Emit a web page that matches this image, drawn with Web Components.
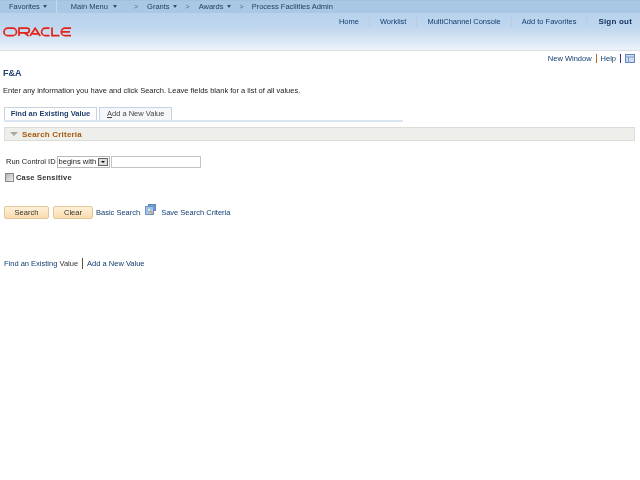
<!DOCTYPE html>
<html>
<head>
<meta charset="utf-8">
<title>F&amp;A</title>
<style>
  html, body { margin: 0; padding: 0; background: #fff; }
  body { font: 7.5px "Liberation Sans", Arial, sans-serif; color: #222; width: 640px; height: 480px; overflow: hidden; }
</style>
</head>
<body>
<ps-header></ps-header>
<ps-page></ps-page>

<template id="tpl-header">
  <style>
    :host { display: block; height: 51px; font-size: 7.5px; border-bottom: 1px solid #dfdfe6; box-sizing: border-box; filter: blur(.25px);
      background: linear-gradient(#b3cfe9 0, #b9d3ec 14px, #c0d7ee 28px, #d0e1f2 36px, #e0ebf7 44px, #edf3fa 50px); }
    nav { display: flex; align-items: center; height: 13px; box-sizing: border-box; padding: 0 0 1px 9px; color: #1f3b58;
      border-top: 1px solid #a5c2dd; background: #a9c8e6; white-space: nowrap; }
    nav span { display: inline-flex; align-items: center; }
    nav i { display: inline-block; width: 0; height: 0; border: 2.5px solid transparent; border-top: 3px solid #33506e; border-bottom: 0; margin-left: 3px; }
    .sep { width: 1px; height: 13px; background: #c6daee; margin: 0 14px 0 9px; }
    .gt { color: #4a6a8c; font-size: 7px; }
    .row { display: flex; justify-content: space-between; align-items: flex-start; }
    svg { display: block; margin: 14px 0 0 3px; }
    ul { display: flex; list-style: none; margin: 4px 0 0; padding: 0 8px 0 0; color: #123c70; line-height: 10px; }
    li { padding: 0 10px; border-left: 1px solid #b5cde4; }
    li:first-child { border: 0; }
    li:last-child { padding: 0 0 0 11px; font-weight: bold; letter-spacing: .2px; color: #10315f; font-size: 8px; }
  </style>
  <nav>
    <span>Favorites<i></i></span><b class="sep"></b>
    <span>Main Menu<i style="margin-left:5px"></i></span>
    <span class="gt" style="margin:0 9px 0 17px">&gt;</span>
    <span>Grants<i></i></span>
    <span class="gt" style="margin:0 9px">&gt;</span>
    <span>Awards<i></i></span>
    <span class="gt" style="margin:0 8px 0 9px">&gt;</span>
    <span>Process Facilities Admin</span>
  </nav>
  <div class="row">
    <svg width="70" height="10" viewBox="0 0 70 10" fill="none" stroke="#e2231a" stroke-width="1.7">
      <rect x="1" y="1.2" width="12.5" height="7.4" rx="3.7"/>
      <path d="M16 9V1.2h8a2.2 2.2 0 0 1 0 4.6h-7.5M21.5 5.8 25.5 9"/>
      <path d="M27 9 32.2 1.2 37.2 9M29.5 6.8h6"/>
      <path d="M46.5 1.2h-4.2a3.7 3.7 0 0 0 0 7.4h4.2"/>
      <path d="M49 .6V8.6h7.5"/>
      <path d="M68 1.2h-6a3.7 3.7 0 0 0 0 7.4h6M58.8 4.9H67"/>
    </svg>
    <ul>
      <li>Home</li><li>Worklist</li><li>MultiChannel Console</li><li>Add to Favorites</li><li>Sign out</li>
    </ul>
  </div>
</template>

<template id="tpl-page">
  <style>
    :host { display: block; font-size: 7.5px; color: #222; filter: blur(.25px); }
    .links { display: flex; justify-content: flex-end; align-items: center; height: 13px; margin-top: 1px; padding-right: 5px; color: #123c70; }
    .links b { width: 1px; height: 9px; margin: 0 4px; }
    .links svg { display: block; }
    h1 { font-size: 9px; line-height: 11px; margin: 3px 0 0 3px; color: #1f3f70; }
    p { margin: 7px 0 0 3px; line-height: 10px; }
    .tabs { display: flex; margin: 11px 0 0 4px; width: 399px; border-bottom: 2px solid #d9e5f1; height: 13px; line-height: 12px; white-space: nowrap; }
    .tab { border: 1px solid #c5d3e2; border-bottom: 0; padding: 0 7px; box-sizing: border-box; height: 13px; margin-right: 2px; color: #444; background: #f5f7fa; }
    .tab.on { font-weight: bold; color: #1f3f70; background: #fff; width: 93px; padding: 0; text-align: center; }
    u { text-decoration: underline; }
    .bar { display: flex; align-items: center; margin: 5px 5px 0 4px; height: 14px; box-sizing: border-box; border: 1px solid #dcdcd6; background: #eeeeea; color: #a3590c; font-size: 8px; font-weight: bold; letter-spacing: .2px; }
    .bar i { width: 0; height: 0; border: 4px solid transparent; border-top: 4px solid #a8a8a2; border-bottom: 0; margin: 0 4px 0 5px; }
    .crit { display: flex; align-items: center; margin: 14px 0 0 6px; height: 13px; white-space: nowrap; }
    .sel { display: flex; align-items: center; justify-content: space-between; width: 53px; height: 12px; box-sizing: border-box; border: 1px solid #b8b8b8; margin-left: 1px; padding-left: 1px; }
    .sel s { display: block; width: 10px; height: 8px; margin-right: 1px; background: #dcdcdc; border: 1px solid #666; box-sizing: border-box; position: relative; }
    .sel s::after { content: ""; position: absolute; left: 2px; top: 2px; border: 2px solid transparent; border-top: 2.5px solid #000; border-bottom: 0; }
    .inp { width: 90px; height: 12px; box-sizing: border-box; border: 1px solid #c4c4c4; margin-left: 1px; }
    .case { display: flex; align-items: center; margin: 3px 0 0 5px; font-weight: bold; color: #333; height: 12px; letter-spacing: .2px; }
    .case i { width: 9px; height: 9px; box-sizing: border-box; border: 1px solid #888; background: linear-gradient(135deg, #b4b4b4, #eee); margin-right: 2px; }
    .acts { display: flex; align-items: center; margin: 22px 0 0 4px; height: 15px; color: #123c70; white-space: nowrap; }
    .btn { width: 45px; height: 13px; line-height: 11px; text-align: center; box-sizing: border-box; border: 1px solid #e3c79a; border-radius: 2px; background: linear-gradient(#fdf0d8, #fbdcae); color: #333; margin-right: 4px; }
    .btn + .btn { width: 40px; margin-right: 3px; }
    .acts svg { display: block; margin: -6px 5px 0 5px; }
    .foot { display: flex; align-items: center; margin: 37px 0 0 4px; height: 12px; color: #123c70; white-space: nowrap; }
    .foot b { width: 1px; height: 11px; background: #5c5030; margin: 0 4px; }
    .dk { color: #333; }
  </style>
  <div class="links">
    <span>New Window</span><b style="background:#b5651d"></b><span>Help</span><b style="background:#3c2f8a"></b>
    <svg width="10" height="9" viewBox="0 0 10 9"><rect x=".5" y=".5" width="9" height="8" fill="#cfdcf0" stroke="#5f86bd"/><path d="M.5 3h9M3.5 3v5.5" stroke="#7d9dcb"/></svg>
  </div>
  <h1>F&amp;A</h1>
  <p>Enter any information you have and click Search. Leave fields blank for a list of all values.</p>
  <div class="tabs">
    <div class="tab on">Find an Existing Value</div>
    <div class="tab"><u>A</u>dd a New Value</div>
  </div>
  <div class="bar"><i></i>Search Criteria</div>
  <div class="crit">Run Control ID<div class="sel">begins with<s></s></div><div class="inp"></div></div>
  <div class="case"><i></i>Case Sensitive</div>
  <div class="acts">
    <div class="btn">Search</div><div class="btn">Clear</div>
    <span>Basic Search</span>
    <svg width="11" height="11" viewBox="0 0 11 11"><rect x="3.5" y=".5" width="7" height="6" fill="#6f9ad2" stroke="#5a86c2"/><rect x=".5" y="2.5" width="8" height="8" fill="#a9c4e6" stroke="#6f94c6"/><circle cx="4" cy="5.8" r="1.8" fill="#eef4fb" stroke="#6f94c6" stroke-width=".7"/><path d="M5.4 7.4 7.6 9.8" stroke="#e0a428" stroke-width="1.4"/></svg>
    <span>Save Search Criteria</span>
  </div>
  <div class="foot"><span>Find an <span style="color:#123c70">Existing</span> <span class="dk">Value</span></span><b></b><span>Add a New Value</span></div>
</template>

<script>
  function stamp(id) {
    return document.getElementById(id).content.cloneNode(true);
  }
  class PsHeader extends HTMLElement {
    connectedCallback() { if (!this.shadowRoot) this.attachShadow({ mode: 'open' }).appendChild(stamp('tpl-header')); }
  }
  class PsPage extends HTMLElement {
    connectedCallback() { if (!this.shadowRoot) this.attachShadow({ mode: 'open' }).appendChild(stamp('tpl-page')); }
  }
  customElements.define('ps-header', PsHeader);
  customElements.define('ps-page', PsPage);
</script>
</body>
</html>
